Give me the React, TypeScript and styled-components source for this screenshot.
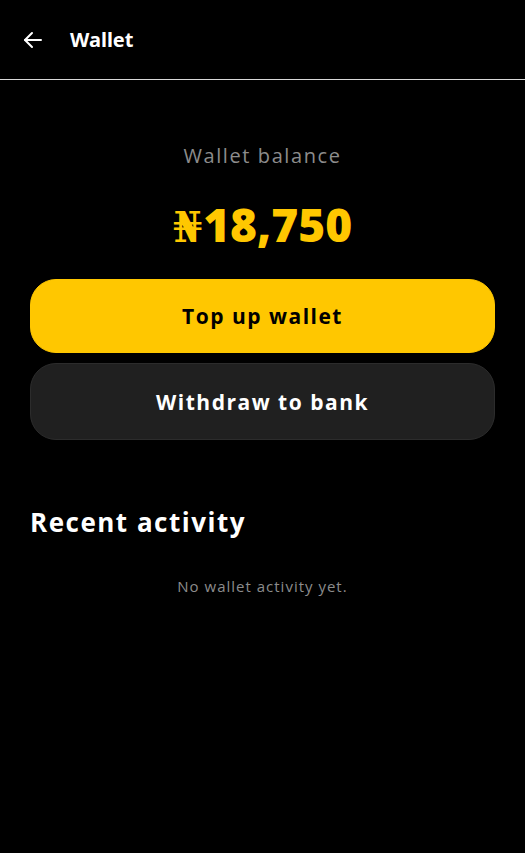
import React from "react";
import styled, { createGlobalStyle } from "styled-components";

const Global = createGlobalStyle`
  html, body { margin: 0; padding: 0; background: #000; }
  body { font-family: "Open Sans", "DejaVu Sans", sans-serif; color: #fff; }
  * { box-sizing: border-box; }
`;

const Page = styled.div`
  min-height: 853px;
  background: #000;
  display: flex;
  flex-direction: column;
`;

const Header = styled.header`
  height: 80px;
  display: flex;
  align-items: center;
  gap: 24px;
  padding: 0 0 0 20px;
  border-bottom: 1px solid #d9d9d9;
`;

const BackButton = styled.button`
  background: none;
  border: none;
  padding: 0;
  width: 26px;
  height: 26px;
  display: flex;
  align-items: center;
  justify-content: center;
  color: #fff;
  cursor: pointer;
`;

const HeaderTitle = styled.h1`
  margin: 0;
  font-family: "Noto Sans", "Open Sans", sans-serif;
  font-size: 20px;
  font-weight: 700;
  color: #fff;
`;

const Content = styled.main`
  padding: 0 30px;
  display: flex;
  flex-direction: column;
`;

const BalanceBlock = styled.section`
  display: flex;
  flex-direction: column;
  align-items: center;
  padding-top: 62px;
`;

const BalanceLabel = styled.div`
  font-size: 20px;
  color: #8c8c8c;
  line-height: 28px;
  letter-spacing: 1.6px;
`;

const Amount = styled.div`
  margin-top: 24px;
  display: flex;
  align-items: baseline;
  font-size: 46px;
  font-weight: 800;
  color: #ffc700;
  line-height: 60px;
`;

const Currency = styled.span`
  font-family: "DejaVu Serif", "Liberation Serif", serif;
  font-weight: 700;
  font-size: 42px;
  margin-right: 1px;
`;

const Actions = styled.div`
  margin-top: 21px;
  display: flex;
  flex-direction: column;
  gap: 10px;
`;

const ActionButton = styled.button<{ $primary?: boolean }>`
  height: ${(p) => (p.$primary ? "74px" : "77px")};
  border-radius: 26px;
  border: 1px solid ${(p) => (p.$primary ? "#ffc700" : "#2c2c2c")};
  background: ${(p) => (p.$primary ? "#ffc700" : "#202020")};
  color: ${(p) => (p.$primary ? "#000" : "#fff")};
  font-family: "Open Sans", sans-serif;
  font-size: 21px;
  font-weight: 700;
  letter-spacing: 1.5px;
  cursor: pointer;
`;

const SectionTitle = styled.h2`
  margin: 64px 0 0;
  font-size: 26px;
  font-weight: 700;
  line-height: 36px;
  letter-spacing: 1.5px;
  color: #fff;
`;

const Empty = styled.p`
  margin: 36px 0 0;
  text-align: center;
  font-size: 15px;
  letter-spacing: 1px;
  color: #8c8c8c;
`;

export default function App() {
  return (
    <Page>
      <Global />
      <Header>
        <BackButton aria-label="Back">
          <svg width="24" height="24" viewBox="0 0 24 24" fill="none" stroke="currentColor" strokeWidth="2" strokeLinecap="round" strokeLinejoin="round">
            <path d="M20 12H4" />
            <path d="M11 5l-7 7 7 7" />
          </svg>
        </BackButton>
        <HeaderTitle>Wallet</HeaderTitle>
      </Header>
      <Content>
        <BalanceBlock>
          <BalanceLabel>Wallet balance</BalanceLabel>
          <Amount>
            <Currency>₦</Currency>18,750
          </Amount>
        </BalanceBlock>
        <Actions>
          <ActionButton $primary>Top up wallet</ActionButton>
          <ActionButton>Withdraw to bank</ActionButton>
        </Actions>
        <SectionTitle>Recent activity</SectionTitle>
        <Empty>No wallet activity yet.</Empty>
      </Content>
    </Page>
  );
}
